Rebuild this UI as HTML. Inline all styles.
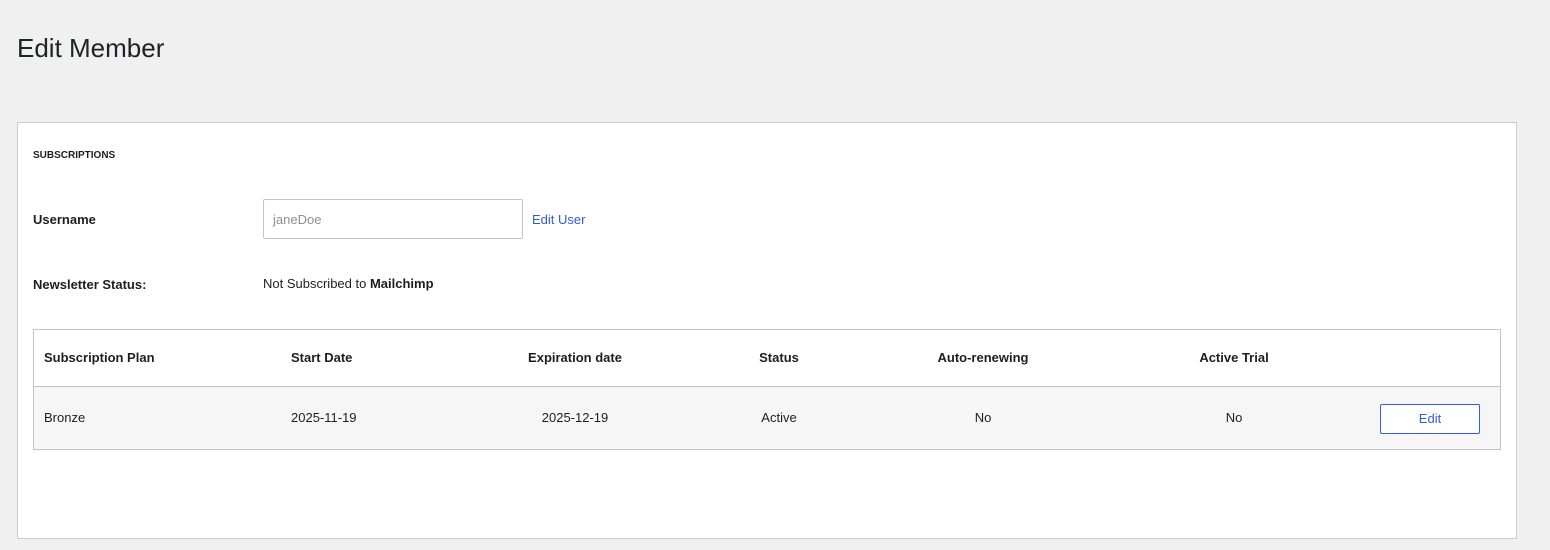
<!DOCTYPE html>
<html><head><style>
body{margin:0;width:1550px;height:550px;background:#f0f0f0;font-family:"Liberation Sans",sans-serif;color:#1e1e1e;position:relative;overflow:hidden}
.a{position:absolute;white-space:nowrap}
.c{transform:translateX(-50%)}
h1{position:absolute;left:17px;top:33px;margin:0;font-size:26px;font-weight:400;color:#1d2327}
.panel{position:absolute;left:17px;top:122px;width:1500px;height:417px;box-sizing:border-box;background:#fff;border:1px solid #ccc}
.tbl{position:absolute;left:33px;top:329px;width:1468px;height:121px;box-sizing:border-box;border:1px solid #c3c4c7;background:#fff;overflow:hidden}
.row{position:absolute;left:0;right:0;top:56px;bottom:0;background:#f5f6f5;border-top:1px solid #c3c4c7}
.th{font-size:13px;font-weight:700;top:350px}
.td{font-size:13px;top:410px}
</style></head><body>
<h1>Edit Member</h1>
<div class="panel"></div>
<div class="a" style="left:33px;top:150px;font-size:10px;font-weight:700">SUBSCRIPTIONS</div>
<div class="a" style="left:33px;top:212px;font-size:13px;font-weight:700">Username</div>
<div class="a" style="left:263px;top:199px;width:260px;height:40px;border:1px solid #c3c4c7;border-radius:2px;box-sizing:border-box;background:#fff"></div>
<div class="a" style="left:273px;top:212px;font-size:13px;color:#8c8f94">janeDoe</div>
<div class="a" style="left:532px;top:212px;font-size:13px;color:#2f5bd8">Edit User</div>
<div class="a" style="left:33px;top:277px;font-size:13px;font-weight:700">Newsletter Status:</div>
<div class="a" style="left:263px;top:276px;font-size:13px">Not Subscribed to <b>Mailchimp</b></div>
<div class="tbl"><div class="row"></div></div>
<div class="a th" style="left:44px">Subscription Plan</div>
<div class="a th" style="left:291px">Start Date</div>
<div class="a th c" style="left:575px">Expiration date</div>
<div class="a th c" style="left:779px">Status</div>
<div class="a th c" style="left:983px">Auto-renewing</div>
<div class="a th c" style="left:1234px">Active Trial</div>
<div class="a td" style="left:44px">Bronze</div>
<div class="a td" style="left:291px">2025-11-19</div>
<div class="a td c" style="left:575px">2025-12-19</div>
<div class="a td c" style="left:779px">Active</div>
<div class="a td c" style="left:983px">No</div>
<div class="a td c" style="left:1234px">No</div>
<div class="a" style="left:1380px;top:404px;width:100px;height:30px;border:1px solid #3858e9;border-radius:2px;box-sizing:border-box;background:#fff;color:#3858e9;font-size:13px;text-align:center;line-height:28px">Edit</div>
</body></html>
